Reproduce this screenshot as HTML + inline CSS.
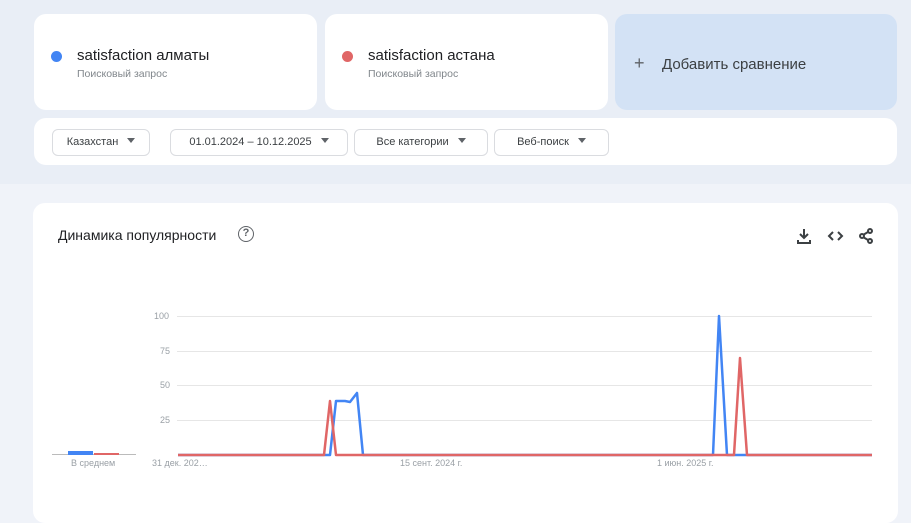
<!DOCTYPE html>
<html><head><meta charset="utf-8"><style>
*{box-sizing:border-box;margin:0;padding:0}
body{width:911px;height:511px;overflow:hidden;background:#f0f3f9;font-family:"Liberation Sans",Arial,sans-serif;position:relative}
.top{position:absolute;left:0;top:0;width:911px;height:184px;background:#e9eef6}
.card{position:absolute;background:#fff;border-radius:12px}
.dot{position:absolute;width:11px;height:11px;border-radius:50%;left:17px;top:37px}
.t{position:absolute;left:43px;top:33px;font-size:15px;color:#202124}
.s{position:absolute;left:43px;top:54px;font-size:10.5px;color:#80868b}
.btn{position:absolute;top:11px;height:27px;border:1px solid #dadce0;border-radius:6px;font-size:11px;color:#3c4043;line-height:25px;text-align:center}
.btn:after{content:"";display:inline-block;margin-left:9px;border:4px solid transparent;border-top:5px solid #5f6368;border-bottom:0;vertical-align:2px}
.ax{position:absolute;font-size:9px;color:#9aa0a6}
</style></head><body>
<div class="top"></div>
<div class="card" style="left:34px;top:14px;width:283px;height:96px">
<div class="dot" style="background:#4285f4"></div><div class="t">satisfaction алматы</div><div class="s">Поисковый запрос</div></div>
<div class="card" style="left:325px;top:14px;width:283px;height:96px">
<div class="dot" style="background:#e06666"></div><div class="t">satisfaction астана</div><div class="s">Поисковый запрос</div></div>
<div class="card" style="left:615px;top:14px;width:282px;height:96px;background:#d3e2f5">
<div style="position:absolute;left:19px;top:40px;font-size:18px;color:#5f6368;line-height:18px">+</div>
<div style="position:absolute;left:47px;top:42px;font-size:15px;color:#3c4043">Добавить сравнение</div></div>
<div class="card" style="left:34px;top:118px;width:863px;height:47px">
<div class="btn" style="left:18px;width:98px">Казахстан</div>
<div class="btn" style="left:136px;width:178px">01.01.2024 – 10.12.2025</div>
<div class="btn" style="left:320px;width:134px">Все категории</div>
<div class="btn" style="left:460px;width:115px">Веб-поиск</div>
</div>
<div class="card" style="left:33px;top:203px;width:865px;height:320px">
<div style="position:absolute;left:25px;top:24px;font-size:14px;color:#202124">Динамика популярности</div>
<div style="position:absolute;left:205px;top:23px;width:16px;height:16px;border:1.6px solid #5f6368;border-radius:50%;font-size:11px;font-weight:bold;color:#5f6368;text-align:center;line-height:13px">?</div>
<svg style="position:absolute;left:760px;top:24px" width="80" height="18" viewBox="0 0 80 18" fill="none" stroke="#3c4043" stroke-width="2">
<path d="M11 2v9M7 7l4 4 4-4M5 13v3h12v-3"/>
<path d="M40 5l-4 4 4 4M45 5l4 4-4 4"/>
<circle cx="77" cy="4" r="2"/><circle cx="69" cy="9" r="2"/><circle cx="77" cy="14" r="2"/><path d="M75 5l-5 3M70 10l5 3"/>
</svg>
</div>
<svg style="position:absolute;left:0;top:0" width="911" height="511">
<g stroke="#e6e6e6" stroke-width="1">
<line x1="177" y1="316.5" x2="872" y2="316.5"/><line x1="177" y1="351.5" x2="872" y2="351.5"/>
<line x1="177" y1="385.5" x2="872" y2="385.5"/><line x1="177" y1="420.5" x2="872" y2="420.5"/>
<line x1="52" y1="454.5" x2="136" y2="454.5" stroke="#bbb"/>
</g>
<rect x="68" y="451" width="25" height="4" fill="#4285f4"/>
<rect x="94" y="453" width="25" height="2" fill="#e06666"/>
<polyline fill="none" stroke="#4285f4" stroke-width="2.5" stroke-linejoin="round" points="178,455 330,455 336,401 345,401 350,402 357,393 363,455 713,455 719,316 727,455 872,455"/>
<polyline fill="none" stroke="#e06666" stroke-width="2.5" stroke-linejoin="round" points="178,455 324,455 330,401 336,455 734,455 740,358 747,455 872,455"/>
</svg>
<div class="ax" style="left:154px;top:311px">100</div>
<div class="ax" style="left:160px;top:346px">75</div>
<div class="ax" style="left:160px;top:380px">50</div>
<div class="ax" style="left:160px;top:415px">25</div>
<div class="ax" style="left:71px;top:458px">В среднем</div>
<div class="ax" style="left:152px;top:458px">31 дек. 202…</div>
<div class="ax" style="left:400px;top:458px">15 сент. 2024 г.</div>
<div class="ax" style="left:657px;top:458px">1 июн. 2025 г.</div>
</body></html>
